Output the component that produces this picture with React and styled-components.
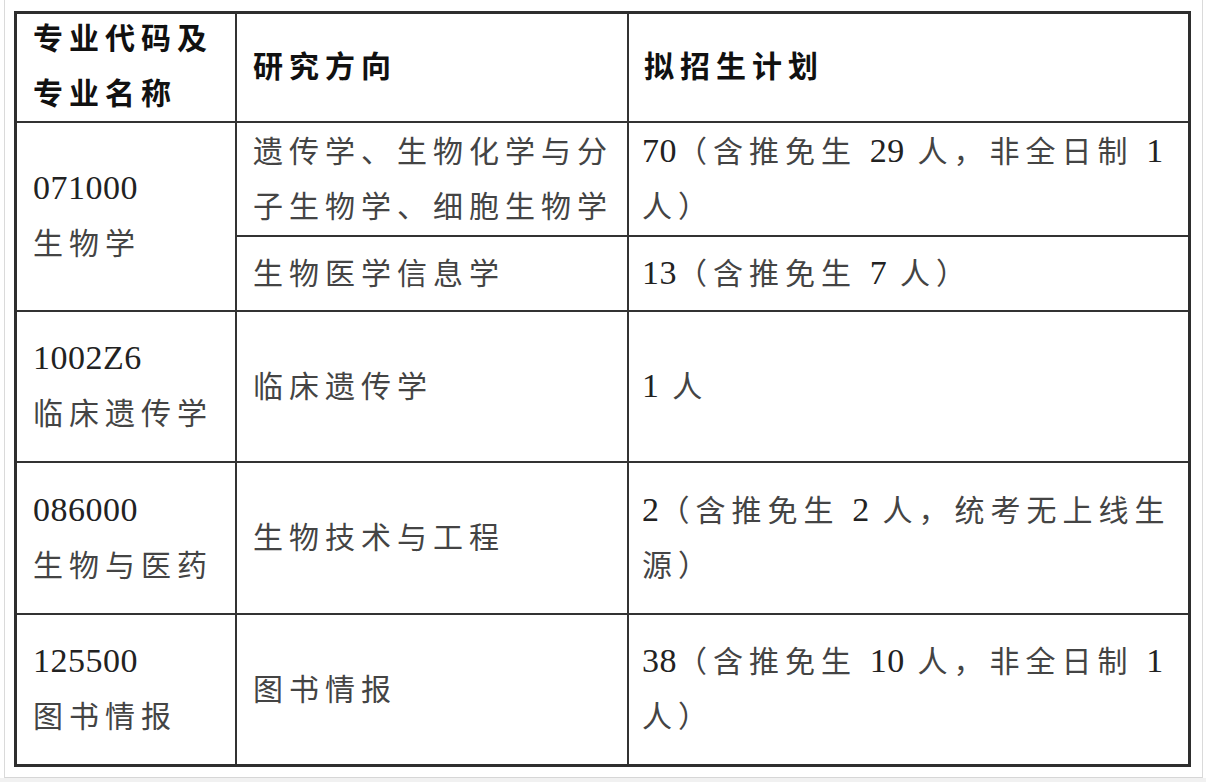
import styled, { createGlobalStyle } from "styled-components";

const GlobalStyle = createGlobalStyle`
  html, body {
    margin: 0;
    padding: 0;
    background: #ffffff;
  }
  #root {
    width: 1206px;
    height: 782px;
  }
`;

const Page = styled.div`
  width: 1206px;
  height: 782px;
  display: flex;
  flex-direction: column;
  overflow: hidden;
`;

const Frame = styled.div`
  margin: 0 3px 0 4px;
  height: 778px;
  box-sizing: border-box;
  border-left: 1px solid #dadada;
  border-right: 1px solid #dadada;
  border-bottom: 1px solid #d6d6d6;
  background: #fff;
  padding: 11px 0 0 9px;
`;

const Strip = styled.div`
  flex: 1;
  background: #f1f1f1;
`;

const Table = styled.div`
  width: 1177px;
  box-sizing: border-box;
  display: grid;
  grid-template-columns: 220px 392px 1fr;
  grid-template-rows: 109px 114px 75px 151px 152px 149px;
  border: 3px solid #2e2e2e;
  font-family: "Noto Sans CJK SC", "Liberation Serif", sans-serif;
  font-size: 30px;
  letter-spacing: 6px;
  line-height: 55px;
  color: #444;
`;

const Cell = styled.div`
  box-sizing: border-box;
  display: flex;
  flex-direction: column;
  justify-content: center;
  padding-left: ${(p) => p.$pad || 16}px;
  padding-bottom: ${(p) => (p.$head ? 7 : 5)}px;
  border-right: ${(p) => (p.$lastCol ? "none" : "2px solid #333")};
  border-bottom: ${(p) => (p.$lastRow ? "none" : "2px solid #333")};
  grid-row: ${(p) => (p.$span ? `span ${p.$span}` : "auto")};
  font-weight: ${(p) => (p.$head ? 700 : 400)};
  color: ${(p) => (p.$head ? "#111" : "inherit")};
`;

const Line = styled.span`
  display: block;
  white-space: nowrap;
`;

const Num = styled.span`
  font-family: "Liberation Serif", serif;
  font-size: 34px;
  letter-spacing: 0.5px;
  line-height: 1;
  color: #222;
`;

export default function App() {
  return (
    <>
      <GlobalStyle />
      <Page>
        <Frame>
          <Table>
            <Cell $head>
              <Line>专业代码及</Line>
              <Line>专业名称</Line>
            </Cell>
            <Cell $head>
              <Line>研究方向</Line>
            </Cell>
            <Cell $head $lastCol $pad={15}>
              <Line>拟招生计划</Line>
            </Cell>

            <Cell $span={2}>
              <Line>
                <Num>071000</Num>
              </Line>
              <Line>生物学</Line>
            </Cell>
            <Cell>
              <Line>遗传学、生物化学与分</Line>
              <Line>子生物学、细胞生物学</Line>
            </Cell>
            <Cell $lastCol $pad={13}>
              <Line>
                <Num>70</Num>（含推免生 <Num>29</Num> 人，非全日制 <Num>1</Num>
              </Line>
              <Line>人）</Line>
            </Cell>
            <Cell>
              <Line>生物医学信息学</Line>
            </Cell>
            <Cell $lastCol $pad={13}>
              <Line>
                <Num>13</Num>（含推免生 <Num>7</Num> 人）
              </Line>
            </Cell>

            <Cell>
              <Line>
                <Num>1002Z6</Num>
              </Line>
              <Line>临床遗传学</Line>
            </Cell>
            <Cell>
              <Line>临床遗传学</Line>
            </Cell>
            <Cell $lastCol $pad={13}>
              <Line>
                <Num>1</Num> 人
              </Line>
            </Cell>

            <Cell>
              <Line>
                <Num>086000</Num>
              </Line>
              <Line>生物与医药</Line>
            </Cell>
            <Cell>
              <Line>生物技术与工程</Line>
            </Cell>
            <Cell $lastCol $pad={13}>
              <Line>
                <Num>2</Num>（含推免生 <Num>2</Num> 人，统考无上线生
              </Line>
              <Line>源）</Line>
            </Cell>

            <Cell $lastRow>
              <Line>
                <Num>125500</Num>
              </Line>
              <Line>图书情报</Line>
            </Cell>
            <Cell $lastRow>
              <Line>图书情报</Line>
            </Cell>
            <Cell $lastRow $lastCol $pad={13}>
              <Line>
                <Num>38</Num>（含推免生 <Num>10</Num> 人，非全日制 <Num>1</Num>
              </Line>
              <Line>人）</Line>
            </Cell>
          </Table>
        </Frame>
        <Strip />
      </Page>
    </>
  );
}
